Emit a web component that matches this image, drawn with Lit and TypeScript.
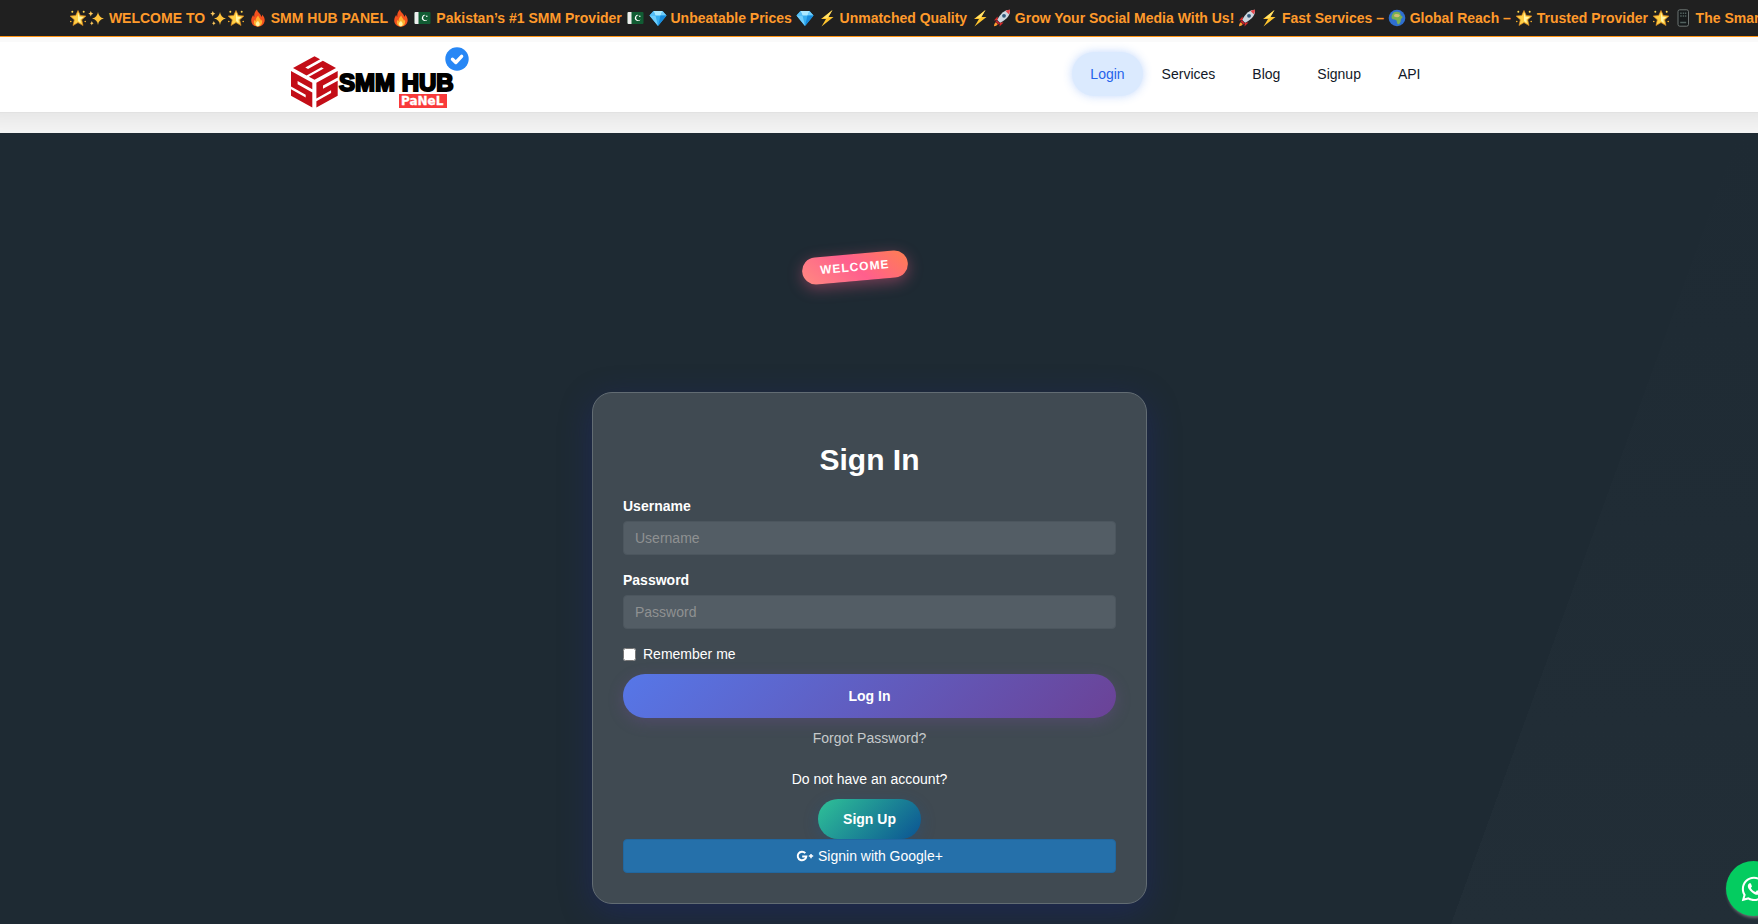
import { LitElement, html, css, svg } from "lit";
import { customElement } from "lit/decorators.js";

const shapes: Record<string, unknown> = {
  star: svg`<path d="M9 1.5l2.3 5 5.6.6-4.2 3.7 1.3 5.7L9 13.6l-5 2.9 1.3-5.7L1.1 7.100l5.600-.6z" fill="#ffcf45" stroke="#d9861c" stroke-width=".7"/><path d="M9 3.500l1.500 4.200 4 .5-3.200 2.300.5 3.500L9 12.100z" fill="#fff5a6"/><circle cx="3.300" cy="2.800" r="1" fill="#ffd84f"/><circle cx="14.700" cy="2.800" r="1" fill="#ffd84f"/><circle cx="1.800" cy="12.500" r=".8" fill="#ffb52e"/><circle cx="16.200" cy="12.500" r=".8" fill="#ffb52e"/>`,
  sparkles: svg`<path d="M11 3q.6 5.400 6 6.500-5.400 1-6 6.500-.6-5.500-6-6.500 5.400-1.100 6-6.500z" fill="#ffc23a"/><path d="M3.800 2q.3 2.300 2.500 2.700-2.200.4-2.500 2.700-.3-2.300-2.500-2.700 2.200-.4 2.500-2.700zM4.800 12q.2 1.800 1.800 2.200-1.600.3-1.800 2.200-.2-1.900-1.800-2.200 1.600-.4 1.800-2.200z" fill="#ffc95c"/>`,
  fire: svg`<path d="M8 .5c.8 3.600 4.100 4.300 4.200 7.200.9-.5 1-1.400.9-2.300 2.300 2.400 3 4.900 2.400 7.400-.7 2.900-3.200 4.900-6.500 4.900-3.800 0-6.800-2.600-6.800-6.300 0-2.300 1.200-4 2-5.600.2 1 .4 1.600 1.100 2C5 5.400 5.600 2.500 8 .5z" fill="#f4511e"/><path d="M9.300 6.500c.3 2 2.500 3.300 2.700 5.300.5-.3.700-.8.800-1.300 1.200 3.500-.6 6.900-3.900 6.900s-5.200-3.600-3.300-6.600c.1.700.3 1.100.9 1.400.2-2.200 1.100-4.300 2.800-5.700z" fill="#ffb02e"/><path d="M9 11.500c.2 1.400 1.900 2 1.700 3.700-.2 1.300-.9 2-1.900 2-1.300 0-2.300-1.100-2-2.600.2-1.300 1.600-1.700 2.200-3.100z" fill="#fff3a0"/>`,
  flag: svg`<rect x="1" y="3" width="16" height="12" rx="1" fill="#115c33"/><path d="M1 4a1 1 0 0 1 1-1h3v12H2a1 1 0 0 1-1-1z" fill="#eee"/><path d="M12.500 6.200a3 3 0 1 0 1.600 4 2.500 2.500 0 1 1-1.600-4z" fill="#fff"/><circle cx="13.300" cy="7.200" r=".8" fill="#fff"/>`,
  gem: svg`<path d="M4.500 2h9L17.500 6.500 9 17 .5 6.500z" fill="#35aef0"/><path d="M4.500 2h9l-2 4.500h-5z" fill="#a9e8ff"/><path d="M.5 6.500h6L9 17zM13.500 2l4 4.500h-6z" fill="#6fcdfb"/><path d="M11.500 6.500h6L9 17z" fill="#178bdc"/><path d="M4.500 2l2 4.500h-6z" fill="#55bdf5"/>`,
  bolt: svg`<path d="M14.500 1L3 10h5l-4.500 7.500L15.500 8h-5z" fill="#ffc42e"/><path d="M14.500 1L5 9h4.500z" fill="#ffe36e"/>`,
  rocket: svg`<path d="M4.500 7.500L1 11.500l4-.5zM10.500 13.500l-4 4 .5-4z" fill="#d92b2b"/><path d="M17 .8C12 .8 7.500 4 4.300 11l2.700 2.700C14 10.500 17.500 6 17 .8z" fill="#cdd6df"/><path d="M17 .8c-1.600 0-3 .3-4.500 1.100l3.300 3.300C16.700 3.800 17.100 2.300 17 .8z" fill="#e5484d"/><circle cx="11" cy="6.800" r="1.900" fill="#31587a"/><path d="M3.800 11.200L7 14.300l-1.500 1.200L2.500 12.500z" fill="#c41f2d"/><path d="M2.800 13.200l2 2c-.9 1.300-2 2-3.800 2 0-1.600.6-3.100 1.800-4z" fill="#ff9a2e"/>`,
  globe: svg`<circle cx="9" cy="9" r="8.300" fill="#2f6fd0"/><path d="M5.500 3.500c2-1.200 5-.9 6.500.2l.8 2.600 2 1.800c-.8 1-2 1.600-2 3.200 0 1.800-1.300 4-2.600 4.200-1.300-.5-1.200-2.700-1.700-4-1.200-1.400-4.300-.4-4.900-2.700-.3-2 .8-3.900 1.900-5.300z" fill="#79b051"/><path d="M6.500 5.500c2-.8 4-.5 5.500.8l-1.200 1.800c-2 .2-3.600-.1-5-.9z" fill="#d0bd73"/>`,
  phone: svg`<rect x="4" y=".8" width="10.500" height="16.400" rx="1.800" fill="#15191a" stroke="#777f7d" stroke-width=".9"/><path d="M6.200 4.200h1.500M8.700 4.200h1.500M11 4.200h1.300M6.200 7h1.500M8.700 7h1.500M11 7h1.300M6.200 13.500h6" stroke="#52625f" stroke-width="1.400"/>`,
};

const icon = (name: string) =>
  html`<svg class="emoji ${name}" viewBox="0 0 18 18" aria-hidden="true">${shapes[name]}</svg>`;

const ticker: Array<[string[], string, string[]]> = [
  [["star", "sparkles"], "WELCOME TO", ["sparkles", "star"]],
  [["fire"], "SMM HUB PANEL", ["fire"]],
  [["flag"], "Pakistan’s #1 SMM Provider", ["flag"]],
  [["gem"], "Unbeatable Prices", ["gem"]],
  [["bolt"], "Unmatched Quality", ["bolt"]],
  [["rocket"], "Grow Your Social Media With Us!", ["rocket"]],
  [["bolt"], "Fast Services –", []],
  [["globe"], "Global Reach –", []],
  [["star"], "Trusted Provider", ["star"]],
  [["phone"], "The Smart Choice", ["phone"]],
];

@customElement("news-ticker")
class NewsTicker extends LitElement {
  static styles = css`
    :host {
      display: block;
      position: relative;
      z-index: 1;
      overflow: hidden;
      background: #202020;
      border-bottom: 1px solid #ff9414;
    }
    .line {
      padding: 8px 0 8px 69px;
      white-space: nowrap;
      font-size: 14px;
      line-height: 20px;
      font-weight: 700;
      color: #ff9a2b;
    }
    .emoji {
      width: 18px;
      height: 18px;
      vertical-align: -4px;
    }
    .flag { width: 19px; }
  `;
  render() {
    return html`<div class="line">${ticker.map(
      ([before, text, after]) =>
        html`${before.map(icon)} ${text} ${after.length ? html`${after.map(icon)} ` : ""}`
    )}</div>`;
  }
}

@customElement("brand-logo")
class BrandLogo extends LitElement {
  static styles = css`
    :host { display: block; }
    svg { display: block; width: 190px; height: 70px; }
    .word { font: 700 24px "Liberation Sans", Arial, sans-serif; fill: #000; stroke: #000; stroke-width: 2px; }
    .tag { font: 700 12px "DejaVu Sans", sans-serif; fill: #fff; stroke: #fff; stroke-width: .3px; }
  `;
  render() {
    const face = "M0 0H10V2.600H3.100V3.900H10V10H0V7.400H6.900V6.300H0Z";
    return html`
      <svg viewBox="285 42 190 70" role="img" aria-label="SMM Hub Panel">
        <g fill="#c30d17">
          <path d=${face} transform="matrix(2.130 1.180 0 2.480 291 71)" />
          <path d=${face} transform="matrix(2.130 -1.180 0 2.480 316.400 82.800)" />
          <path d=${face} transform="matrix(2.150 -1.180 2.150 1.180 293 68)" />
        </g>
        <text class="word" x="339" y="91">SMM HUB</text>
        <rect x="399" y="94" width="48" height="14" fill="#f93a3a" />
        <text class="tag" x="401" y="105">PaNeL</text>
        <circle cx="457" cy="59" r="11.700" fill="#2787f5" />
        <path d="M452.500 59.300l3.300 3.200 5.800-6.200" fill="none" stroke="#fff" stroke-width="3.400" stroke-linecap="round" stroke-linejoin="round" />
      </svg>`;
  }
}

@customElement("site-header")
class SiteHeader extends LitElement {
  static styles = css`
    :host {
      display: block;
      position: relative;
      background: #fff;
      border-top: 5px solid #fafafa;
      border-bottom: 1px solid #e2e2e2;
      padding-right: 19px;
      box-shadow: 0 -26px 30px 30px rgba(0, 0, 0, 0.1);
    }
    .bar {
      display: flex;
      justify-content: space-between;
      max-width: 1170px;
      height: 70px;
      margin: 0 auto;
    }
    nav {
      display: flex;
      gap: 1px;
      align-items: flex-start;
      padding: 10px 16px;
    }
    a {
      padding: 12px 18px;
      border-radius: 22px;
      font-size: 14px;
      line-height: 20px;
      font-weight: 500;
      color: #111827;
      text-decoration: none;
    }
    .active {
      color: #2563eb;
      background: #dbeafe;
      box-shadow: 0 0 10px rgba(59, 130, 246, 0.3);
    }
  `;
  render() {
    return html`<div class="bar">
      <brand-logo></brand-logo>
      <nav>
        ${["Login", "Services", "Blog", "Signup", "API"].map(
          (t, i) => html`<a href="#" class=${i === 0 ? "active" : "item"}>${t}</a>`
        )}
      </nav>
    </div>`;
  }
}

@customElement("sign-in-card")
class SignInCard extends LitElement {
  static styles = css`
    :host {
      display: block;
      box-sizing: border-box;
      width: 100%;
      max-width: 555px;
      padding: 30px;
      border: 1px solid #626c73;
      border-radius: 20px;
      background: #404a52;
      box-shadow: 0 8px 32px rgba(31, 38, 135, 0.37);
      font-size: 14px;
      line-height: 20px;
      color: #fff;
    }
    h1 { margin: 20px 0; font-size: 30px; line-height: 33px; text-align: center; }
    .field { display: flex; flex-direction: column; gap: 5px; margin-bottom: 15px; }
    .field label { font-weight: 700; }
    .field input {
      box-sizing: border-box;
      height: 34px;
      padding: 6px 11px;
      border: 1px solid #4c565e;
      border-radius: 4px;
      background: #535d65;
      color: #fff;
      font: inherit;
    }
    .field input::placeholder { color: #8f9192; opacity: 1; }
    .remember { display: flex; align-items: center; gap: 7px; margin-bottom: 10px; }
    .remember input { width: 13px; height: 13px; margin: 0; }
    .login {
      display: block;
      width: 100%;
      padding: 12px;
      border: 0;
      border-radius: 22px;
      background: linear-gradient(135deg, #5677e8, #6b4296);
      box-shadow: 0 4px 15px rgba(118, 75, 162, 0.3);
      color: #fff;
      font: inherit;
      font-weight: 700;
    }
    .center { display: flex; flex-direction: column; align-items: center; }
    .forgot { margin: 10px 0 21px; color: #c6c9cb; text-decoration: none; }
    .signup {
      margin-top: 10px;
      padding: 10px 25px;
      border-radius: 20px;
      background: linear-gradient(135deg, #2fc297, #0b5394);
      box-shadow: 0 4px 15px rgba(24, 90, 157, 0.3);
      color: #fff;
      font-weight: 700;
      text-decoration: none;
    }
    .google {
      display: flex;
      justify-content: center;
      align-items: center;
      gap: 4px;
      box-sizing: border-box;
      width: 100%;
      height: 34px;
      position: relative;
      border: 1px solid #2067a0;
      border-radius: 4px;
      background: #2570aa;
      color: #fff;
      font: inherit;
    }
    .google svg { width: 18px; height: 12px; }
  `;
  render() {
    return html`
      <h1>Sign In</h1>
      <form @submit=${(e: Event) => e.preventDefault()}>
        <div class="field">
          <label for="user">Username</label>
          <input id="user" type="text" placeholder="Username" />
        </div>
        <div class="field">
          <label for="pass">Password</label>
          <input id="pass" type="password" placeholder="Password" />
        </div>
        <label class="remember"><input type="checkbox" /><span>Remember me</span></label>
        <button class="login" type="submit">Log In</button>
        <div class="center">
          <a class="forgot" href="#">Forgot Password?</a>
          <span>Do not have an account?</span>
          <a class="signup" href="#">Sign Up</a>
        </div>
        <button class="google" type="button">
          <svg viewBox="0 0 18 12" aria-hidden="true">
            <path d="M9.300 3.200A4.300 4.300 0 1 0 10.300 6.600H6.200" fill="none" stroke="#fff" stroke-width="2" />
            <path d="M15 3.900v4.400M12.800 6.100h4.400" stroke="#fff" stroke-width="1.500" />
          </svg>
          Signin with Google+
        </button>
      </form>`;
  }
}

@customElement("app-root")
class AppRoot extends LitElement {
  static styles = css`
    :host {
      display: flex;
      flex-direction: column;
      min-height: 100vh;
      overflow: hidden;
      background: #f7f7f7;
      font-family: "Liberation Sans", Arial, Helvetica, sans-serif;
    }
    site-header { margin-bottom: 20px; }
    main {
      position: relative;
      flex: 1;
      display: flex;
      flex-direction: column;
      align-items: center;
      padding: 121px 19px 20px 0;
      background:
        linear-gradient(110deg, #1e2a33 85%, transparent 85%),
        linear-gradient(#1e2a33, #222e37);
    }
    .badge {
      margin: 0 30px 111px 0;
      padding: 5px 18px;
      border-radius: 14px;
      background: linear-gradient(45deg, #ff8a80, #ff5f8d, #ff7f50);
      box-shadow: 0 4px 15px rgba(255, 95, 141, 0.4);
      color: #fff;
      font-size: 12px;
      line-height: 17px;
      font-weight: 700;
      letter-spacing: 1px;
      transform: rotate(-5deg);
    }
    .chat {
      position: fixed;
      right: -23px;
      bottom: 8px;
      display: grid;
      place-items: center;
      width: 55px;
      height: 55px;
      border-radius: 50%;
      background: #04cc60;
      box-shadow: 1px 2px 3px rgba(153, 153, 153, 0.6);
    }
    .chat svg { width: 28px; height: 28px; }
  `;
  render() {
    return html`
      <news-ticker></news-ticker>
      <site-header></site-header>
      <main>
        <div class="badge">WELCOME</div>
        <sign-in-card></sign-in-card>
      </main>
      <a class="chat" href="#" aria-label="WhatsApp">
        <svg viewBox="0 0 448 512" fill="#fff" aria-hidden="true">
          <path d="M380.900 97.100C339 55.100 283.200 32 223.900 32c-122.400 0-222 99.600-222 222 0 39.100 10.200 77.300 29.600 111L0 480l117.700-30.900c32.400 17.700 68.900 27 106.100 27h.1c122.300 0 224.100-99.600 224.100-222 0-59.300-25.200-115-67.100-157zm-157 341.600c-33.200 0-65.700-8.900-94-25.700l-6.700-4-69.800 18.300L72 359.200l-4.400-7c-18.500-29.400-28.200-63.300-28.200-98.200 0-101.700 82.800-184.500 184.600-184.500 49.300 0 95.600 19.200 130.400 54.100 34.800 34.900 56.200 81.200 56.100 130.500 0 101.800-84.900 184.600-186.600 184.600zm101.200-138.200c-5.500-2.800-32.800-16.200-37.900-18-5.100-1.900-8.800-2.800-12.500 2.800-3.700 5.600-14.300 18-17.600 21.800-3.200 3.700-6.500 4.200-12 1.400-32.600-16.300-54-29.100-75.500-66-5.700-9.800 5.700-9.100 16.300-30.300 1.800-3.700.9-6.900-.5-9.700-1.400-2.800-12.500-30.100-17.100-41.200-4.500-10.800-9.100-9.300-12.500-9.500-3.200-.2-6.900-.2-10.600-.2-3.700 0-9.700 1.400-14.800 6.900-5.100 5.600-19.400 19-19.400 46.300 0 27.300 19.900 53.700 22.600 57.400 2.800 3.700 39.100 59.700 94.800 83.800 35.200 15.200 49 16.500 66.600 13.900 10.700-1.600 32.800-13.400 37.400-26.400 4.600-13 4.600-24.100 3.200-26.400-1.300-2.500-5-3.900-10.500-6.600z" />
        </svg>
      </a>`;
  }
}
